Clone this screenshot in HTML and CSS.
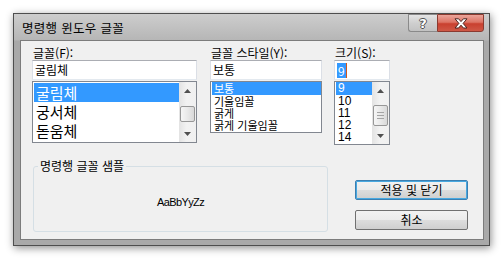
FILE: index.html
```html
<!DOCTYPE html>
<html lang="ko">
<head>
  <meta charset="UTF-8">
  <title>명령행 윈도우 글꼴</title>
  <link rel="stylesheet" href="styles.css">
</head>
<body>
  <div class="page">
    <div class="window">
      <!-- Title bar -->
      <div class="titlebar">
        <span class="title">명령행 윈도우 글꼴</span>
        <div class="caption">
          <span class="cap-btn help">?</span>
          <span class="cap-btn close">
            <svg width="14" height="11" viewBox="0 0 14 11"><path d="M1 0.8 H4.6 L7 3.6 L9.4 0.8 H13 L9.1 5.4 L13 10 H9.4 L7 7.2 L4.6 10 H1 L4.9 5.4 Z" fill="#fff" stroke="#4b2420" stroke-width="1" stroke-linejoin="round"/></svg>
          </span>
        </div>
      </div>

      <!-- Client area -->
      <div class="client">
        <div class="fields">
          <div class="col col-font">
            <div class="label">글꼴(F):</div>
            <div class="input">굴림체</div>
            <div class="list list-font">
              <div class="items">
                <div class="item selected">굴림체</div>
                <div class="item">궁서체</div>
                <div class="item">돋움체</div>
              </div>
              <div class="scrollbar">
                <div class="arrow"><svg width="7" height="4" viewBox="0 0 7 4"><path d="M0 4 L3.5 0 L7 4 Z" fill="#505050"/></svg></div>
                <div class="track"><div class="thumb thumb-font"></div></div>
                <div class="arrow"><svg width="7" height="4" viewBox="0 0 7 4"><path d="M0 0 L3.5 4 L7 0 Z" fill="#505050"/></svg></div>
              </div>
            </div>
          </div>

          <div class="col col-style">
            <div class="label">글꼴 스타일(Y):</div>
            <div class="input">보통</div>
            <div class="list list-style">
              <div class="items small">
                <div class="item selected">보통</div>
                <div class="item">기울임꼴</div>
                <div class="item">굵게</div>
                <div class="item">굵게 기울임꼴</div>
              </div>
            </div>
          </div>

          <div class="col col-size">
            <div class="label">크기(S):</div>
            <div class="input"><span class="sel">9</span><span class="caret"></span></div>
            <div class="list list-size">
              <div class="items small digits">
                <div class="item selected">9</div>
                <div class="item">10</div>
                <div class="item">11</div>
                <div class="item">12</div>
                <div class="item">14</div>
              </div>
              <div class="scrollbar">
                <div class="arrow"><svg width="7" height="4" viewBox="0 0 7 4"><path d="M0 4 L3.5 0 L7 4 Z" fill="#505050"/></svg></div>
                <div class="track"><div class="thumb thumb-size"><span class="grip"></span></div></div>
                <div class="arrow"><svg width="7" height="4" viewBox="0 0 7 4"><path d="M0 0 L3.5 4 L7 0 Z" fill="#505050"/></svg></div>
              </div>
            </div>
          </div>
        </div>

        <div class="bottom">
          <fieldset class="sample">
            <legend>명령행 글꼴 샘플</legend>
            <div class="sample-text">AaBbYyZz</div>
          </fieldset>
          <div class="actions">
            <button class="btn default">적용 및 닫기</button>
            <button class="btn">취소</button>
          </div>
        </div>
      </div>
    </div>
  </div>
</body>
</html>
```

FILE: styles.css
```css
:root {
  --frame: #a9a9a9;
  --face: #f0f0f0;
  --select: #3399ff;
  --list-border: #828790;
  --text: #000000;
}

body {
  margin: 0;
  background: #ffffff;
  font-family: "Noto Sans CJK KR", "Noto Sans", sans-serif;
  font-size: 12px;
  color: var(--text);
}

.page {
  padding: 13px;
}

/* Window frame */
.window {
  width: 477px;
  height: 233px;
  box-sizing: border-box;
  border: 1px solid #4e4e4e;
  background: linear-gradient(to bottom, #cdcdcd 0, #b6b6b6 26px, var(--frame) 27px);
  padding: 0 5px 5px 6px;
  display: flex;
  flex-direction: column;
  box-shadow: 1px 2px 8px rgba(0, 0, 0, 0.45);
}

.titlebar {
  height: 26px;
  display: flex;
  align-items: flex-start;
}

.title {
  padding: 7px 0 0 2px;
  line-height: 14px;
  font-size: 12.5px;
  letter-spacing: 0.3px;
}

.caption {
  margin-left: auto;
  display: flex;
}

.cap-btn {
  height: 18px;
  box-sizing: border-box;
  display: flex;
  align-items: center;
  justify-content: center;
}

.help {
  width: 29px;
  border: 1px solid #8a8a8a;
  border-right: none;
  border-radius: 0 0 0 3px;
  background: linear-gradient(to bottom, #e4e4e4, #cfcfcf 50%, #c2c2c2);
  color: #ffffff;
  font-family: "DejaVu Sans", sans-serif;
  font-weight: bold;
  font-size: 13px;
  text-shadow: 1px 0 #505050, -1px 0 #505050, 0 1px #505050, 0 -1px #505050;
}

.close {
  width: 47px;
  border: 1px solid #8b3a30;
  border-radius: 0 0 3px 0;
  background: linear-gradient(to bottom, #eaa49a, #dd7465 45%, #c9402f 55%, #cf5846);
}

/* Client area */
.client {
  flex: 1;
  background: var(--face);
  border: 1px solid #7c7c7c;
}

.fields {
  display: flex;
  padding: 5px 0 0 11px;
}

.col-font { width: 165px; }
.col-style { width: 112px; margin-left: 13px; }
.col-size { width: 56px; margin-left: 12px; }

.label {
  height: 14px;
  line-height: 14px;
  padding-left: 1px;
  white-space: nowrap;
}

.input {
  height: 20px;
  box-sizing: border-box;
  border: 1px solid #abadb3;
  border-left-color: #dbdfe6;
  border-right-color: #dbdfe6;
  border-bottom-color: #e3e9ef;
  background: #ffffff;
  padding-left: 2px;
  line-height: 18px;
  display: flex;
  align-items: center;
}

.sel {
  background: var(--select);
  color: #ffffff;
  line-height: 15px;
  padding: 0 1px;
}

.caret {
  width: 1px;
  height: 15px;
  background: #d0561c;
}

.list {
  margin-top: 1px;
  box-sizing: border-box;
  border: 1px solid var(--list-border);
  background: #ffffff;
  display: flex;
}

.list-font { height: 62px; }
.list-style { height: 52px; }
.list-size { height: 64px; }

.items {
  flex: 1;
  padding: 1px 0 0 1px;
}

.item {
  height: 19px;
  line-height: 19px;
  font-size: 15px;
  padding-left: 2px;
  white-space: nowrap;
}

.items.small {
  padding-top: 0;
}

.items.small .item {
  height: 12px;
  line-height: 12px;
  font-size: 11px;
}

.items.small .item.selected {
  height: 13px;
  line-height: 13px;
}

.items.digits .item {
  font-family: "Liberation Sans", sans-serif;
  font-size: 12px;
}

.item.selected {
  background: var(--select);
  color: #ffffff;
}

/* Scrollbars */
.scrollbar {
  width: 17px;
  display: flex;
  flex-direction: column;
  background: linear-gradient(to right, #e3e3e3, #f2f2f2 45%, #f0f0f0);
}

.arrow {
  height: 17px;
  display: flex;
  align-items: center;
  justify-content: center;
}

.track {
  flex: 1;
}

.thumb {
  margin: 0 1px;
  box-sizing: border-box;
  border: 1px solid #979797;
  border-radius: 2px;
  background: linear-gradient(to right, #f6f6f6, #e9e9e9 50%, #d9d9d9);
}

.thumb-font { margin-top: 7px; height: 16px; }
.thumb-size { margin-top: 6px; height: 21px; display: flex; align-items: center; justify-content: center; }

.grip {
  width: 7px;
  height: 5px;
  border-top: 1px solid #a4a4a4;
  border-bottom: 1px solid #a4a4a4;
  background: linear-gradient(to bottom, transparent 2px, #a4a4a4 2px, #a4a4a4 3px, transparent 3px);
}

/* Sample group and buttons */
.bottom {
  display: flex;
  padding-left: 12px;
  margin-top: 14px;
}

.sample {
  margin: 0;
  padding: 0;
  width: 295px;
  height: 73px;
  box-sizing: border-box;
  border: 1px solid #d5dfe5;
  border-radius: 3px;
  display: flex;
  align-items: center;
  justify-content: center;
}

.sample legend {
  margin-left: 4px;
  padding: 0 2px;
  line-height: 14px;
}

.sample-text {
  font-family: "Liberation Sans", sans-serif;
  font-size: 11px;
  letter-spacing: -0.6px;
}

.actions {
  margin-left: 27px;
  padding-top: 21px;
  display: flex;
  flex-direction: column;
  gap: 10px;
}

.btn {
  width: 113px;
  height: 20px;
  box-sizing: border-box;
  border: 1px solid #707070;
  border-radius: 2px;
  background: linear-gradient(to bottom, #f2f2f2, #ebebeb 50%, #dddddd 51%, #cfcfcf);
  font-family: inherit;
  font-size: 12px;
  line-height: 16px;
  padding: 0;
  color: var(--text);
}

.btn.default {
  border-color: #3c7fb1;
  box-shadow: inset 0 0 0 1px #48a8e0;
}
```
